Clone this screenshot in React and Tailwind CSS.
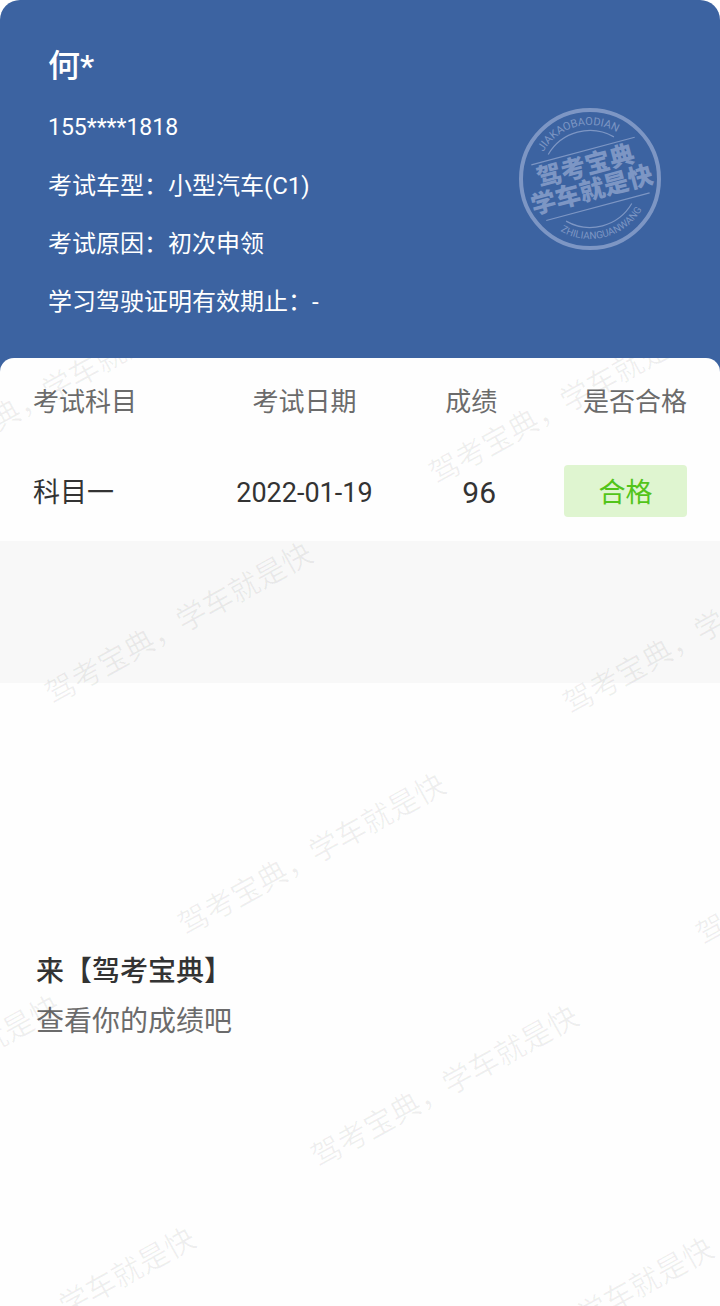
import React from 'react';

const profile = {
  name: '何*',
  phone: '155****1818',
  lines: ['考试车型：小型汽车(C1)', '考试原因：初次申领', '学习驾驶证明有效期止：-'],
};

const results = [{ subject: '科目一', date: '2022-01-19', score: '96', status: '合格' }];

// centre points of the watermark grid, relative to the white panel
const watermarks = [
  [45, 36],
  [563, 46],
  [179, 266],
  [697, 276],
  [312, 497],
  [830, 507],
  [-73, 719],
  [445, 729],
  [62, 951],
  [580, 961],
];

function Stamp() {
  return (
    <svg viewBox="-72 -72 144 144" className="mt-[61px] h-36 w-36 flex-none" fill="none" stroke="#7d96c4" role="img" aria-label="驾考宝典 学车就是快">
      <defs>
        <path id="stamp-top" d="M-54 0A54 54 0 0 1 54 0" />
        <path id="stamp-bottom" d="M-60 0A60 60 0 0 0 60 0" />
      </defs>
      <circle r="69" strokeWidth="4" />
      <g transform="rotate(-15)">
        <path d="M-34 -34.5A48.4 48.4 0 0 1 34 -34.5M-34 34.5A48.4 48.4 0 0 0 34 34.5" strokeWidth="1.2" />
        <path d="M-53 -28.8H54M-53 28.8H54" strokeWidth="1.2" />
        <g fill="#7d96c4" stroke="none" textAnchor="middle">
          <text x="-1" y="-5" className="text-[25px] font-black">驾考宝典</text>
          <text x="-1" y="20" className="text-[25px] font-black">学车就是快</text>
          <text className="text-[11px]">
            <textPath href="#stamp-top" startOffset="50%">JIAKAOBAODIAN</textPath>
          </text>
          <text className="text-[10px]">
            <textPath href="#stamp-bottom" startOffset="50%">ZHILIANGUANWANG</textPath>
          </text>
        </g>
      </g>
    </svg>
  );
}

function Watermark() {
  return (
    <div className="pointer-events-none absolute inset-0 overflow-hidden rounded-t-[14px]" aria-hidden="true">
      {watermarks.map(([x, y]) => (
        <span
          key={`${x},${y}`}
          className="absolute -translate-x-1/2 -translate-y-1/2 -rotate-[29deg] text-[30px] leading-10 whitespace-nowrap text-black/6"
          style={{ left: x, top: y }}
        >
          驾考宝典，学车就是快
        </span>
      ))}
    </div>
  );
}

function ResultTable() {
  return (
    <table className="mb-[5px] w-full table-fixed text-[27px] text-[#333]">
      <thead>
        <tr className="h-[88px] text-[26px] text-[#6b6b6b]">
          <th className="w-[23%] text-left font-normal whitespace-nowrap">考试科目</th>
          <th className="w-[37%] text-center font-normal">考试日期</th>
          <th className="w-[14%] text-center font-normal">成绩</th>
          <th className="w-[26%] text-right font-normal">是否合格</th>
        </tr>
      </thead>
      <tbody>
        {results.map((row) => (
          <tr key={row.subject} className="h-[90px]">
            <td className="pt-1">{row.subject}</td>
            <td className="pt-1 text-center">{row.date}</td>
            <td className="pt-0.5 pl-4 text-center text-[30px]">{row.score}</td>
            <td className="text-right">
              <span className="inline-block w-[123px] rounded bg-[#dff5d0] pt-1 text-center align-middle leading-12 text-[#52c41a]">
                {row.status}
              </span>
            </td>
          </tr>
        ))}
      </tbody>
    </table>
  );
}

export default function App() {
  return (
    <div className="flex min-h-screen flex-col rounded-t-[20px] bg-[#3c63a1] font-[Roboto,'Noto_Sans_CJK_SC',sans-serif]">
      <header className="flex items-start justify-between pt-[46px] pr-[58px] pb-[39px] pl-12 text-white">
        <div>
          <h1 className="mb-[25px] text-[32px] leading-10 font-medium">{profile.name}</h1>
          <div className="flex flex-col gap-6 text-[24px] leading-[34px]">
            <p className="text-[23px]">{profile.phone}</p>
            {profile.lines.map((line) => (
              <p key={line}>{line}</p>
            ))}
          </div>
        </div>
        <Stamp />
      </header>

      <main className="relative flex-1 rounded-t-[14px] bg-[#fefefe]">
        <section className="px-[33px]">
          <ResultTable />
        </section>
        <div className="h-[142px] bg-[#f8f8f8]" />
        <section className="px-9 pt-[264px]">
          <h2 className="text-[28px] leading-[50px] font-medium text-[#333]">来【驾考宝典】</h2>
          <p className="text-[28px] leading-[50px] text-[#6b6b6b]">查看你的成绩吧</p>
        </section>
        <Watermark />
      </main>
    </div>
  );
}
